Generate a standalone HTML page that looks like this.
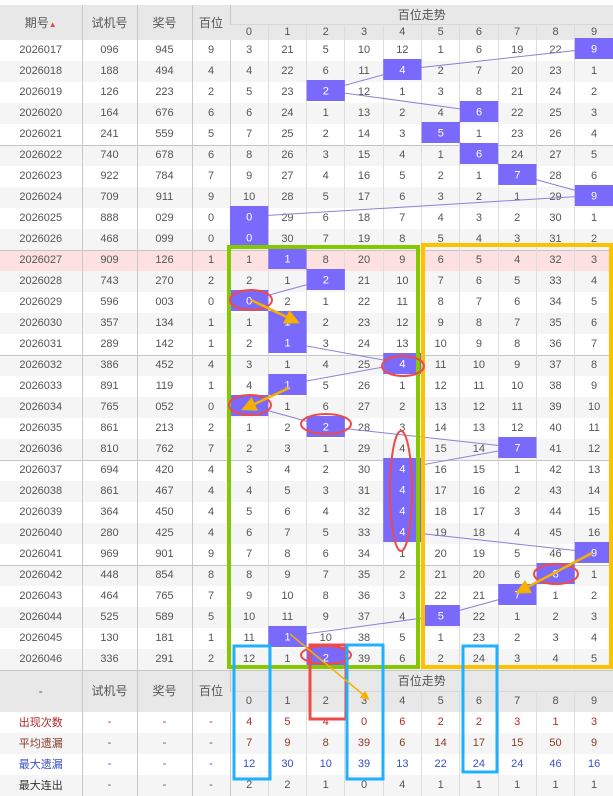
<!DOCTYPE html>
<html><head><meta charset="utf-8">
<style>
*{margin:0;padding:0;box-sizing:border-box}
body{width:613px;height:795px;overflow:hidden;background:#fff;font-family:"Liberation Sans","Noto Sans CJK SC",sans-serif;position:relative}
table{border-collapse:collapse;table-layout:fixed;width:613px;position:absolute;left:0;top:0}
td,th{padding:0;text-align:center;font-size:11px;color:#555;font-weight:normal;border-left:1px solid #ddd;white-space:nowrap;overflow:hidden}
td.l,th.l{border-left:1px solid #c8c8c8}
td:first-child,th:first-child{border-left:none}
tr.d{height:21px}
tr.g td{background:#f5f5f5}
tr.p td{background:#fde1e1}
tr.sep td{box-shadow:inset 0 1px 0 #c4c4c4}
th{background:#e8e8e8;font-size:12px}
.hd1{height:21px}
.hd2{height:16px}
.hd2 th{font-size:11px;box-shadow:inset 0 1px 0 #d8d8d8}
.ft th{box-shadow:inset 0 1px 0 #c4c4c4}
.r{color:#b02a2a}.b{color:#3a4fc8}
</style></head><body>
<table>
<colgroup><col style="width:82px"><col style="width:55px"><col style="width:55px"><col style="width:38px"><col span="10" style="width:38.3px"></colgroup>
<tr class="hd1"><th rowspan="2" style="border-top:5px solid #fff">期号<span style="color:#e44;font-size:8px">▲</span></th><th rowspan="2" class="l" style="border-top:5px solid #fff">试机号</th><th rowspan="2" class="l" style="border-top:5px solid #fff">奖号</th><th rowspan="2" class="l" style="border-top:5px solid #fff">百位</th><th colspan="10" class="l" style="border-top:5px solid #fff">百位走势</th></tr>
<tr class="hd2"><th class="l">0</th><th>1</th><th>2</th><th>3</th><th>4</th><th>5</th><th>6</th><th>7</th><th>8</th><th>9</th></tr>
<tr class="d"><td>2026017</td><td class="l">096</td><td class="l">945</td><td class="l">9</td><td class="l">3</td><td>21</td><td>5</td><td>10</td><td>12</td><td>1</td><td>6</td><td>19</td><td>22</td><td>9</td></tr>
<tr class="d g"><td>2026018</td><td class="l">188</td><td class="l">494</td><td class="l">4</td><td class="l">4</td><td>22</td><td>6</td><td>11</td><td>4</td><td>2</td><td>7</td><td>20</td><td>23</td><td>1</td></tr>
<tr class="d"><td>2026019</td><td class="l">126</td><td class="l">223</td><td class="l">2</td><td class="l">5</td><td>23</td><td>2</td><td>12</td><td>1</td><td>3</td><td>8</td><td>21</td><td>24</td><td>2</td></tr>
<tr class="d g"><td>2026020</td><td class="l">164</td><td class="l">676</td><td class="l">6</td><td class="l">6</td><td>24</td><td>1</td><td>13</td><td>2</td><td>4</td><td>6</td><td>22</td><td>25</td><td>3</td></tr>
<tr class="d"><td>2026021</td><td class="l">241</td><td class="l">559</td><td class="l">5</td><td class="l">7</td><td>25</td><td>2</td><td>14</td><td>3</td><td>5</td><td>1</td><td>23</td><td>26</td><td>4</td></tr>
<tr class="d g sep"><td>2026022</td><td class="l">740</td><td class="l">678</td><td class="l">6</td><td class="l">8</td><td>26</td><td>3</td><td>15</td><td>4</td><td>1</td><td>6</td><td>24</td><td>27</td><td>5</td></tr>
<tr class="d"><td>2026023</td><td class="l">922</td><td class="l">784</td><td class="l">7</td><td class="l">9</td><td>27</td><td>4</td><td>16</td><td>5</td><td>2</td><td>1</td><td>7</td><td>28</td><td>6</td></tr>
<tr class="d g"><td>2026024</td><td class="l">709</td><td class="l">911</td><td class="l">9</td><td class="l">10</td><td>28</td><td>5</td><td>17</td><td>6</td><td>3</td><td>2</td><td>1</td><td>29</td><td>9</td></tr>
<tr class="d"><td>2026025</td><td class="l">888</td><td class="l">029</td><td class="l">0</td><td class="l">0</td><td>29</td><td>6</td><td>18</td><td>7</td><td>4</td><td>3</td><td>2</td><td>30</td><td>1</td></tr>
<tr class="d g"><td>2026026</td><td class="l">468</td><td class="l">099</td><td class="l">0</td><td class="l">0</td><td>30</td><td>7</td><td>19</td><td>8</td><td>5</td><td>4</td><td>3</td><td>31</td><td>2</td></tr>
<tr class="d p sep"><td>2026027</td><td class="l">909</td><td class="l">126</td><td class="l">1</td><td class="l">1</td><td>1</td><td>8</td><td>20</td><td>9</td><td>6</td><td>5</td><td>4</td><td>32</td><td>3</td></tr>
<tr class="d g"><td>2026028</td><td class="l">743</td><td class="l">270</td><td class="l">2</td><td class="l">2</td><td>1</td><td>2</td><td>21</td><td>10</td><td>7</td><td>6</td><td>5</td><td>33</td><td>4</td></tr>
<tr class="d"><td>2026029</td><td class="l">596</td><td class="l">003</td><td class="l">0</td><td class="l">0</td><td>2</td><td>1</td><td>22</td><td>11</td><td>8</td><td>7</td><td>6</td><td>34</td><td>5</td></tr>
<tr class="d g"><td>2026030</td><td class="l">357</td><td class="l">134</td><td class="l">1</td><td class="l">1</td><td>1</td><td>2</td><td>23</td><td>12</td><td>9</td><td>8</td><td>7</td><td>35</td><td>6</td></tr>
<tr class="d"><td>2026031</td><td class="l">289</td><td class="l">142</td><td class="l">1</td><td class="l">2</td><td>1</td><td>3</td><td>24</td><td>13</td><td>10</td><td>9</td><td>8</td><td>36</td><td>7</td></tr>
<tr class="d g sep"><td>2026032</td><td class="l">386</td><td class="l">452</td><td class="l">4</td><td class="l">3</td><td>1</td><td>4</td><td>25</td><td>4</td><td>11</td><td>10</td><td>9</td><td>37</td><td>8</td></tr>
<tr class="d"><td>2026033</td><td class="l">891</td><td class="l">119</td><td class="l">1</td><td class="l">4</td><td>1</td><td>5</td><td>26</td><td>1</td><td>12</td><td>11</td><td>10</td><td>38</td><td>9</td></tr>
<tr class="d g"><td>2026034</td><td class="l">765</td><td class="l">052</td><td class="l">0</td><td class="l">0</td><td>1</td><td>6</td><td>27</td><td>2</td><td>13</td><td>12</td><td>11</td><td>39</td><td>10</td></tr>
<tr class="d"><td>2026035</td><td class="l">861</td><td class="l">213</td><td class="l">2</td><td class="l">1</td><td>2</td><td>2</td><td>28</td><td>3</td><td>14</td><td>13</td><td>12</td><td>40</td><td>11</td></tr>
<tr class="d g"><td>2026036</td><td class="l">810</td><td class="l">762</td><td class="l">7</td><td class="l">2</td><td>3</td><td>1</td><td>29</td><td>4</td><td>15</td><td>14</td><td>7</td><td>41</td><td>12</td></tr>
<tr class="d sep"><td>2026037</td><td class="l">694</td><td class="l">420</td><td class="l">4</td><td class="l">3</td><td>4</td><td>2</td><td>30</td><td>4</td><td>16</td><td>15</td><td>1</td><td>42</td><td>13</td></tr>
<tr class="d g"><td>2026038</td><td class="l">861</td><td class="l">467</td><td class="l">4</td><td class="l">4</td><td>5</td><td>3</td><td>31</td><td>4</td><td>17</td><td>16</td><td>2</td><td>43</td><td>14</td></tr>
<tr class="d"><td>2026039</td><td class="l">364</td><td class="l">450</td><td class="l">4</td><td class="l">5</td><td>6</td><td>4</td><td>32</td><td>4</td><td>18</td><td>17</td><td>3</td><td>44</td><td>15</td></tr>
<tr class="d g"><td>2026040</td><td class="l">280</td><td class="l">425</td><td class="l">4</td><td class="l">6</td><td>7</td><td>5</td><td>33</td><td>4</td><td>19</td><td>18</td><td>4</td><td>45</td><td>16</td></tr>
<tr class="d"><td>2026041</td><td class="l">969</td><td class="l">901</td><td class="l">9</td><td class="l">7</td><td>8</td><td>6</td><td>34</td><td>1</td><td>20</td><td>19</td><td>5</td><td>46</td><td>9</td></tr>
<tr class="d g sep"><td>2026042</td><td class="l">448</td><td class="l">854</td><td class="l">8</td><td class="l">8</td><td>9</td><td>7</td><td>35</td><td>2</td><td>21</td><td>20</td><td>6</td><td>8</td><td>1</td></tr>
<tr class="d"><td>2026043</td><td class="l">464</td><td class="l">765</td><td class="l">7</td><td class="l">9</td><td>10</td><td>8</td><td>36</td><td>3</td><td>22</td><td>21</td><td>7</td><td>1</td><td>2</td></tr>
<tr class="d g"><td>2026044</td><td class="l">525</td><td class="l">589</td><td class="l">5</td><td class="l">10</td><td>11</td><td>9</td><td>37</td><td>4</td><td>5</td><td>22</td><td>1</td><td>2</td><td>3</td></tr>
<tr class="d"><td>2026045</td><td class="l">130</td><td class="l">181</td><td class="l">1</td><td class="l">11</td><td>1</td><td>10</td><td>38</td><td>5</td><td>1</td><td>23</td><td>2</td><td>3</td><td>4</td></tr>
<tr class="d g"><td>2026046</td><td class="l">336</td><td class="l">291</td><td class="l">2</td><td class="l">12</td><td>1</td><td>2</td><td>39</td><td>6</td><td>2</td><td>24</td><td>3</td><td>4</td><td>5</td></tr>
<tr style="height:21px" class="ft"><th rowspan="2">-</th><th rowspan="2" class="l">试机号</th><th rowspan="2" class="l">奖号</th><th rowspan="2" class="l">百位</th><th colspan="10" class="l">百位走势</th></tr>
<tr style="height:21px" class="hd2"><th class="l">0</th><th>1</th><th>2</th><th>3</th><th>4</th><th>5</th><th>6</th><th>7</th><th>8</th><th>9</th></tr>
<tr class="d"><td class="r">出现次数</td><td class="l r">-</td><td class="l r">-</td><td class="l r">-</td><td class="l r">4</td><td class="r">5</td><td class="r">4</td><td class="r">0</td><td class="r">6</td><td class="r">2</td><td class="r">2</td><td class="r">3</td><td class="r">1</td><td class="r">3</td></tr>
<tr class="d g"><td style="color:#8a3a2a">平均遗漏</td><td class="l" style="color:#8a3a2a">-</td><td class="l" style="color:#8a3a2a">-</td><td class="l" style="color:#8a3a2a">-</td><td class="l" style="color:#8a3a2a">7</td><td style="color:#8a3a2a">9</td><td style="color:#8a3a2a">8</td><td style="color:#8a3a2a">39</td><td style="color:#8a3a2a">6</td><td style="color:#8a3a2a">14</td><td style="color:#8a3a2a">17</td><td style="color:#8a3a2a">15</td><td style="color:#8a3a2a">50</td><td style="color:#8a3a2a">9</td></tr>
<tr class="d"><td class="b">最大遗漏</td><td class="l b">-</td><td class="l b">-</td><td class="l b">-</td><td class="l b">12</td><td class="b">30</td><td class="b">10</td><td class="b">39</td><td class="b">13</td><td class="b">22</td><td class="b">24</td><td class="b">24</td><td class="b">46</td><td class="b">16</td></tr>
<tr class="d g"><td style="color:#333">最大连出</td><td class="l">-</td><td class="l">-</td><td class="l">-</td><td class="l">2</td><td>2</td><td>1</td><td>0</td><td>4</td><td>1</td><td>1</td><td>1</td><td>1</td><td>1</td></tr>
</table>
<svg width="613" height="795" style="position:absolute;left:0;top:0" font-family="Liberation Sans, sans-serif" font-size="11">
<polyline fill="none" stroke="#8c82d6" stroke-width="1" points="594,48.5 402.4,69.5 325.8,90.5 479.1,111.5 440.8,132.5 479.1,153.5 517.4,174.5 594,195.5 249.2,216.5 249.2,237.5 287.5,258.5 325.8,279.5 249.2,300.5 287.5,321.5 287.5,342.5 402.4,363.5 287.5,384.5 249.2,405.5 325.8,426.5 517.4,447.5 402.4,468.5 402.4,489.5 402.4,510.5 402.4,531.5 594,552.5 555.7,573.5 517.4,594.5 440.8,615.5 287.5,636.5 325.8,657.5"/>
<g fill="#7a6afc">
<rect x="574.8" y="38" width="38.3" height="21"/><rect x="383.2" y="59" width="38.3" height="21"/><rect x="306.6" y="80" width="38.3" height="21"/><rect x="459.9" y="101" width="38.3" height="21"/><rect x="421.6" y="122" width="38.3" height="21"/><rect x="459.9" y="143" width="38.3" height="21"/><rect x="498.2" y="164" width="38.3" height="21"/><rect x="574.8" y="185" width="38.3" height="21"/><rect x="230" y="206" width="38.3" height="21"/><rect x="230" y="227" width="38.3" height="21"/><rect x="268.3" y="248" width="38.3" height="21"/><rect x="306.6" y="269" width="38.3" height="21"/><rect x="230" y="290" width="38.3" height="21"/><rect x="268.3" y="311" width="38.3" height="21"/><rect x="268.3" y="332" width="38.3" height="21"/><rect x="383.2" y="353" width="38.3" height="21"/><rect x="268.3" y="374" width="38.3" height="21"/><rect x="230" y="395" width="38.3" height="21"/><rect x="306.6" y="416" width="38.3" height="21"/><rect x="498.2" y="437" width="38.3" height="21"/><rect x="383.2" y="458" width="38.3" height="84"/><rect x="574.8" y="542" width="38.3" height="21"/><rect x="536.5" y="563" width="38.3" height="21"/><rect x="498.2" y="584" width="38.3" height="21"/><rect x="421.6" y="605" width="38.3" height="21"/><rect x="268.3" y="626" width="38.3" height="21"/><rect x="306.6" y="647" width="38.3" height="21"/>
</g>
<g fill="#fff" text-anchor="middle">
<text x="594" y="52.5">9</text><text x="402.4" y="73.5">4</text><text x="325.8" y="94.5">2</text><text x="479.1" y="115.5">6</text><text x="440.8" y="136.5">5</text><text x="479.1" y="157.5">6</text><text x="517.4" y="178.5">7</text><text x="594" y="199.5">9</text><text x="249.2" y="220.5">0</text><text x="249.2" y="241.5">0</text><text x="287.5" y="262.5">1</text><text x="325.8" y="283.5">2</text><text x="249.2" y="304.5">0</text><text x="287.5" y="325.5">1</text><text x="287.5" y="346.5">1</text><text x="402.4" y="367.5">4</text><text x="287.5" y="388.5">1</text><text x="249.2" y="409.5">0</text><text x="325.8" y="430.5">2</text><text x="517.4" y="451.5">7</text><text x="402.4" y="472.5">4</text><text x="402.4" y="493.5">4</text><text x="402.4" y="514.5">4</text><text x="402.4" y="535.5">4</text><text x="594" y="556.5">9</text><text x="555.7" y="577.5">8</text><text x="517.4" y="598.5">7</text><text x="440.8" y="619.5">5</text><text x="287.5" y="640.5">1</text><text x="325.8" y="661.5">2</text>
</g>
<rect x="229" y="247" width="189" height="420" fill="none" stroke="#84c800" stroke-width="4"/>
<rect x="423" y="245" width="188" height="422" fill="none" stroke="#ffc000" stroke-width="4"/>
<g fill="none" stroke="#ee4a4a" stroke-width="2">
<ellipse cx="251" cy="300" rx="21" ry="10"/><ellipse cx="403" cy="366" rx="21" ry="10"/><ellipse cx="250" cy="405" rx="21" ry="10"/><ellipse cx="326" cy="424" rx="25" ry="10"/><ellipse cx="401" cy="491" rx="11" ry="60"/><ellipse cx="556" cy="574" rx="22" ry="10"/><ellipse cx="326" cy="655" rx="25" ry="9"/>
<rect x="310" y="645" width="36" height="74" stroke-width="3"/>
</g>
<g fill="none" stroke="#1fb0ff" stroke-width="3">
<rect x="234" y="646" width="36" height="133"/><rect x="347" y="645" width="36" height="134"/><rect x="463" y="646" width="34" height="126"/>
</g>
<defs><marker id="a" markerWidth="6" markerHeight="6" refX="3" refY="3" orient="auto"><path d="M0,0 L6,3 L0,6 z" fill="#f5b000"/></marker></defs>
<g stroke="#f5b000" fill="none">
<line x1="251" y1="300" x2="293" y2="320" stroke-width="2.5" marker-end="url(#a)"/>
<line x1="289" y1="388" x2="248" y2="407" stroke-width="2.5" marker-end="url(#a)"/>
<line x1="592" y1="553" x2="522" y2="590" stroke-width="2.5" marker-end="url(#a)"/>
<line x1="290" y1="634" x2="366" y2="697" stroke-width="1.5" marker-end="url(#a)"/>
</g>
</svg>
</body></html>
